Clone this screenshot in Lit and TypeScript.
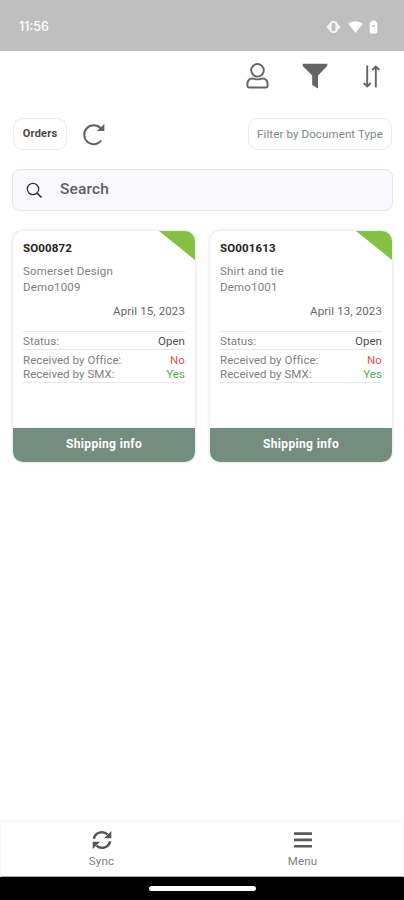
import { LitElement, html, css, svg } from "lit";
import { customElement, property } from "lit/decorators.js";

interface Order {
  id: string;
  name: string;
  account: string;
  date: string;
}

const orders: Order[] = [
  { id: "SO00872", name: "Somerset Design", account: "Demo1009", date: "April 15, 2023" },
  { id: "SO001613", name: "Shirt and tie", account: "Demo1001", date: "April 13, 2023" },
];

@customElement("order-card")
class OrderCard extends LitElement {
  @property({ attribute: false }) order!: Order;

  static styles = css`
    :host { display: flex; flex-direction: column; position: relative; box-sizing: border-box; height: 231px; border-radius: 10px; overflow: hidden; background: #fff; box-shadow: 0 0 3px 1px #e6e8e7; font-family: Roboto, sans-serif; color: #808080; }
    .corner { position: absolute; top: 0; right: 0; width: 36px; height: 29px; background: #86c043; clip-path: polygon(0 0, 100% 0, 100% 100%); }
    .body { flex: 1; padding: 9px 10px 0; font-size: 11.5px; letter-spacing: 0.06px; }
    .id { font-size: 11.5px; font-weight: 700; line-height: 16px; letter-spacing: 0.15px; color: #222; }
    .who { margin-top: 8px; line-height: 15.5px; letter-spacing: 0.18px; }
    .date { margin-top: 9px; line-height: 14px; text-align: right; color: #666; letter-spacing: 0.12px; margin-bottom: 13px; }
    .row { display: flex; justify-content: space-between; line-height: 14px; }
    .group { border-top: 1px solid #e8e8e8; padding-top: 2px; }
    .first { height: 15px; padding-top: 2px; }
    .last { border-bottom: 1px solid #e8e8e8; padding: 3px 0 1px; }
    .open { color: #505050; }
    .no { color: #f0504b; }
    .yes { color: #4caf50; }
    .ship { height: 34px; line-height: 33px; text-align: center; color: #fff; background: #748d7e; font-size: 12px; font-weight: 700; letter-spacing: 0.35px; }
  `;

  render() {
    const o = this.order;
    return html`
      <div class="corner"></div>
      <div class="body">
        <div class="id">${o.id}</div>
        <div class="who">${o.name}<br />${o.account}</div>
        <div class="date">${o.date}</div>
        <div class="group first"><div class="row"><span>Status:</span><span class="open">Open</span></div></div>
        <div class="group last">
          <div class="row"><span>Received by Office:</span><span class="no">No</span></div>
          <div class="row"><span>Received by SMX:</span><span class="yes">Yes</span></div>
        </div>
      </div>
      <div class="ship">Shipping info</div>
    `;
  }
}

@customElement("app-root")
class AppRoot extends LitElement {
  static styles = css`
    :host { display: flex; flex-direction: column; height: 900px; background: #fff; font-family: Roboto, sans-serif; color: #616161; overflow: hidden; }
    svg { display: block; }
    .status { height: 51px; box-sizing: border-box; padding: 2px 26px 0 19px; display: flex; align-items: center; background: #bfbfbf; color: #fff; }
    .time { flex: 1; font: 500 12.5px/16px Inter, sans-serif; letter-spacing: 0; }
    .vib { margin-right: 7px; opacity: 0.85; }
    .wifi { margin-right: 6px; }
    .tools { display: flex; justify-content: flex-end; align-items: center; height: 50px; padding-right: 24px; }
    .user { margin-right: 33px; }
    .funnel { margin-right: 35px; }
    .filters { display: flex; align-items: center; margin: 17px 12px 0 13px; height: 32px; }
    .chip { box-sizing: border-box; height: 32px; line-height: 30px; text-align: center; border: 1px solid #ebebed; border-radius: 10px; font-size: 11.5px; white-space: nowrap; }
    .orders { width: 54px; font-size: 11px; font-weight: 700; color: #484848; letter-spacing: 0.2px; }
    .refresh { flex: 1; margin-left: 15px; }
    .type { width: 144px; color: #7b8783; letter-spacing: 0.12px; }
    .search { box-sizing: border-box; display: flex; align-items: center; height: 42px; margin: 19px 11px 0 12px; padding: 0 0 2px 13px; border: 1px solid #e6e6e9; border-radius: 8px; background: #f8f8fd; font-size: 15.5px; font-weight: 500; letter-spacing: 0.15px; }
    .search svg { margin: 2px 17px 0 0; }
    .cards { display: grid; grid-template-columns: 1fr 1fr; gap: 15px; margin: 20px 12px 0 13px; flex: 1; align-items: start; }
    .nav { display: flex; height: 55px; margin: 0 1px; background: #fff; box-shadow: 0 0 4px #ebebeb; border-bottom: 1px solid #aaa; box-sizing: border-box; font-size: 11.5px; letter-spacing: 0.2px; color: #808080; }
    .tab { flex: 1; display: flex; flex-direction: column; align-items: center; padding-top: 8px; line-height: 14px; }
    .tab svg { margin-bottom: 4px; }
    .home { height: 23px; background: #000; display: flex; justify-content: center; box-sizing: border-box; padding-top: 9px; position: relative; }
    .pill { width: 107px; height: 5px; border-radius: 3px; background: #fff; }
  `;

  render() {
    return html`
      <div class="status">
        <span class="time">11:56</span>
        <svg class="vib" width="15" height="14" viewBox="0 0 15 14">
          <path d="M4 3 0.5 7 4 11zM11 3l3.500 4L11 11z" fill="#fff" />
          <rect x="4.700" y="2" width="5.600" height="10" rx="2" fill="none" stroke="#fff" stroke-width="1.800" />
        </svg>
        <svg class="wifi" width="15" height="14" viewBox="0 0 15 14">
          <path d="M7.500 1.200C4.800 1.200 2.300 2.100.3 3.800L7.500 13l7.200-9.200c-2-1.700-4.500-2.600-7.200-2.600z" fill="#fff" />
        </svg>
        <svg width="9" height="14" viewBox="0 0 9 14">
          <path fill-rule="evenodd" d="M2.500.5h4v1.200A1.700 1.700 0 0 1 8.300 3.400v8.400A1.700 1.700 0 0 1 6.600 13.500H2.400A1.700 1.700 0 0 1 .7 11.800V3.400A1.700 1.700 0 0 1 2.500 1.700zM3 5v1.600h3V5z" fill="#fff" />
        </svg>
      </div>

      <div class="tools">
        <svg class="user" width="23" height="26" viewBox="0 0 23 26" fill="none" stroke="#646464" stroke-width="1.900">
          <circle cx="11.500" cy="7.300" r="6.300" />
          <path d="M1.300 22.200c0-4.300 2-6.700 5.200-6.700 1.300 0 2.700.9 5 .9s3.700-.9 5-.9c3.200 0 5.200 2.400 5.200 6.700 0 1.500-.7 2.300-2 2.300H3.300c-1.300 0-2-.8-2-2.300z" />
        </svg>
        <svg class="funnel" width="26" height="26" viewBox="0 0 26 26">
          <path d="M.7.800h24.600c.4 1.500-.2 2.400-1.300 3.500L16 12.500V25.500L10.200 22V12.500L2 4.300C.9 3.200.3 2.300.7.800z" fill="#646464" />
        </svg>
        <svg width="17" height="23" viewBox="0 0 17 23" fill="none" stroke="#646464" stroke-width="1.900">
          <path d="M4.200.5V20.500M12.800 22.500V2.500" />
          <path d="M.7 18 4.200 21.500 7.700 18M9.300 5l3.500-3.500L16.300 5" />
        </svg>
      </div>

      <div class="filters">
        <div class="chip orders">Orders</div>
        <div class="refresh">
          <svg width="24" height="24" viewBox="0 0 24 24">
            <path d="M18.600 6.200A9.500 9.500 0 1 0 19.300 18.500" fill="none" stroke="#606060" stroke-width="2" />
            <path d="M22.400 1.800V9H15z" fill="#606060" />
          </svg>
        </div>
        <div class="chip type">Filter by Document Type</div>
      </div>

      <div class="search">
        <svg width="17" height="17" viewBox="0 0 17 17" fill="none" stroke="#333">
          <circle cx="7" cy="7" r="5.700" stroke-width="1.300" />
          <path d="m11 11 4.500 4.500" stroke-width="1.700" />
        </svg>
        <span>Search</span>
      </div>

      <div class="cards">${orders.map((o) => html`<order-card .order=${o}></order-card>`)}</div>

      <div class="nav">
        <div class="tab">
          <svg width="20" height="20" viewBox="0 0 20 20">
            <path d="M1.800 8.800A8.300 8.300 0 0 1 15.500 4.400M18.200 11.200A8.300 8.300 0 0 1 4.500 15.600" fill="none" stroke="#555" stroke-width="2.500" />
            <path d="M19.300 1V8.300H12zM.7 19V11.700H8z" fill="#555" />
          </svg>
          <span>Sync</span>
        </div>
        <div class="tab">
          <svg width="20" height="20" viewBox="0 0 20 20">
            ${[2.2, 8.6, 14.9].map((y) => svg`<rect x="1" y=${y} width="18" height="2.700" rx="0.500" fill="#5a5a5a" />`)}
          </svg>
          <span>Menu</span>
        </div>
      </div>
      <div class="home"><div class="pill"></div></div>
    `;
  }
}
